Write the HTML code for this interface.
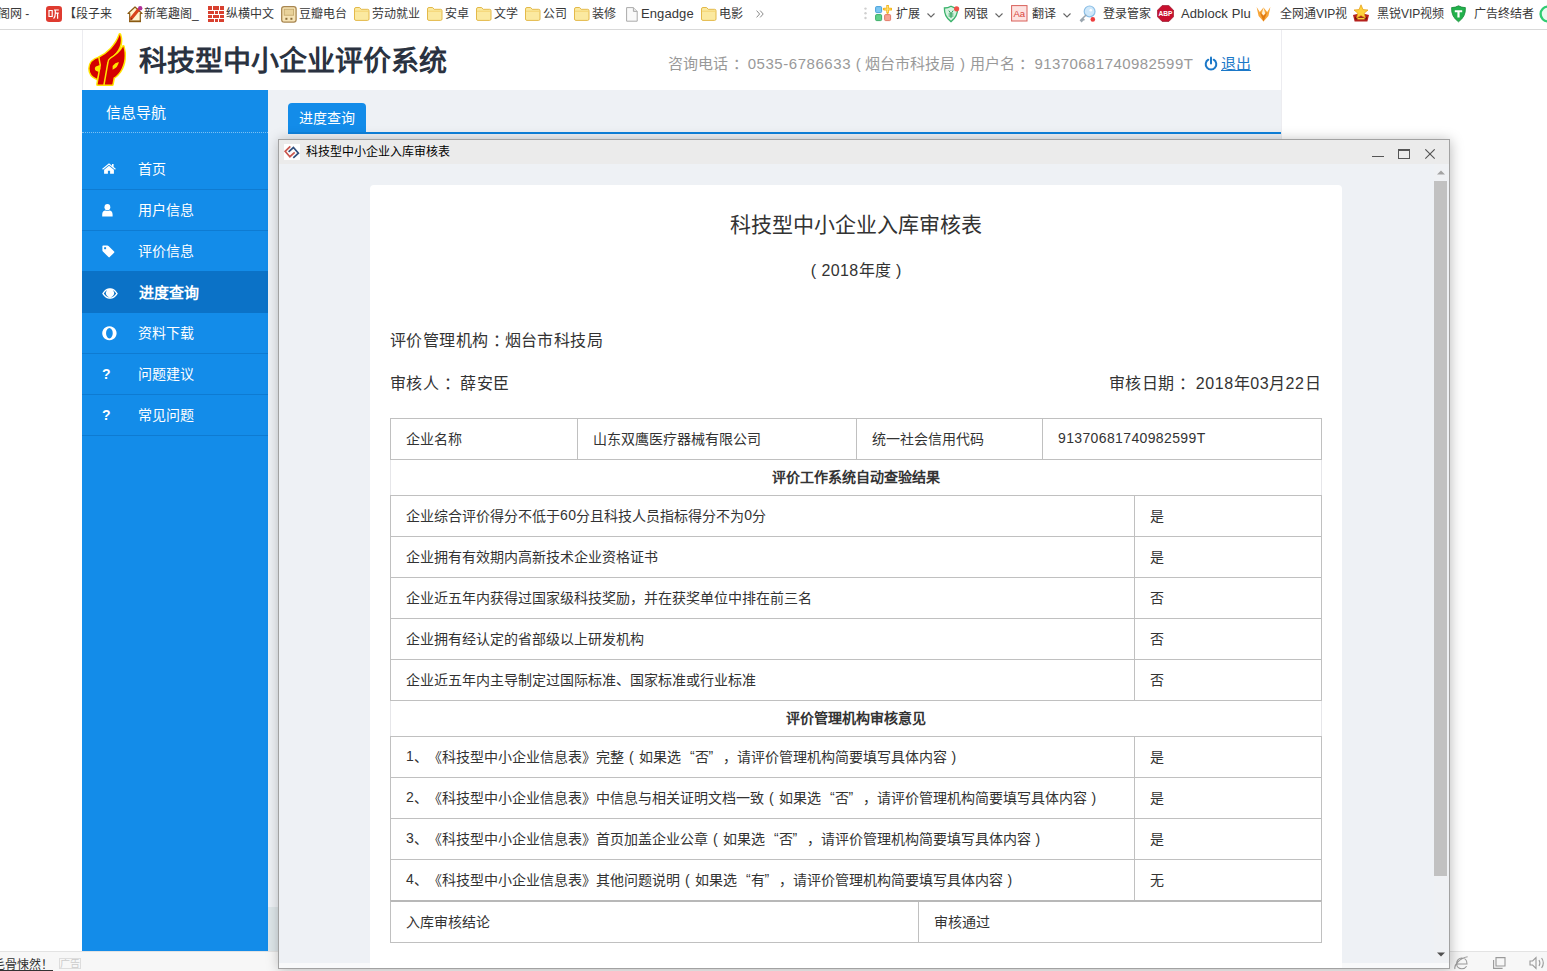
<!DOCTYPE html>
<html lang="zh-CN">
<head>
<meta charset="utf-8">
<title>科技型中小企业评价系统</title>
<style>
*{box-sizing:border-box;margin:0;padding:0}
html,body{width:1547px;height:971px;overflow:hidden;background:#fff}
body{font-family:"Liberation Sans",sans-serif;font-size:14px;color:#333;position:relative;text-spacing-trim:space-all}
.abs{position:absolute}
.n{letter-spacing:.37px}
/* bookmark bar */
#bm{left:0;top:0;width:1547px;height:30px;background:#fff;border-bottom:1px solid #d9d9d9;font-size:12px;color:#383838}
#bm span{position:absolute;top:5px;white-space:nowrap;line-height:18px}
#bm span.l{font-size:13px;letter-spacing:.1px}
#bm svg{position:absolute}
/* page frame */
#pg{left:82px;top:30px;width:1200px;height:921px;border-left:1px solid #ececf0;border-right:1px solid #ececf0}
/* header */
#hd{left:83px;top:30px;width:1198px;height:60px;background:#fff}
#hd .title{left:56px;top:12px;font-size:28px;font-weight:900;color:#2a3240;line-height:40px;white-space:nowrap}
#hd .info{left:585px;top:22px;word-spacing:.5px;font-size:15px;color:#999;line-height:24px;white-space:nowrap}
#hd .exit{left:1138px;top:22px;font-size:15px;color:#1b78c8;line-height:24px;text-decoration:underline;white-space:nowrap}
/* sidebar */
#sb{left:82px;top:90px;width:186px;height:861px;background:#138ce9;color:#fff}
#sb .h{position:absolute;left:0;top:0;width:186px;height:43px;line-height:46px;padding-left:24px;font-size:15px;border-bottom:1px dotted #7cc0f3}
#sb .m{position:absolute;left:0;width:186px;height:41px;line-height:40px;font-size:14px;border-bottom:1px solid #0e7bd2;padding-left:56px}
#sb .m.on{background:#0b72c7;font-weight:bold;font-size:15px;padding-left:57px;border-bottom:0}
#sb svg{position:absolute}
/* main */
#mn{left:268px;top:90px;width:1013px;height:861px;background:#eef1f5}
#mn .tab{left:20px;top:13px;width:78px;height:30px;background:#138ce9;color:#fff;font-size:14px;line-height:30px;text-align:center;border-radius:4px 4px 0 0}
#mn .line{left:20px;top:42px;width:993px;height:2px;background:#0f82dc}
#mn .dk{left:0;top:817px;width:1013px;height:44px;background:#dee6e9}
/* status bar */
#st{left:0;top:951px;width:1547px;height:20px;background:#f7f7f7;border-top:1px solid #e3e3e3;font-size:12px;color:#333}
/* dialog */
#dg{left:278px;top:139px;width:1172px;height:830px;background:#eef1f5;border:1px solid #a2a2a2;box-shadow:1px 1px 12px rgba(0,0,0,.26)}
#dg .tb{left:0;top:0;width:1170px;height:24px;background:#ebebeb}
#dg .tt{left:27px;top:4px;font-size:12px;color:#000;line-height:16px;white-space:nowrap}
#dg .sc{left:1155px;top:24px;width:15px;height:804px;background:#eff1f4}
#dg .th{left:1155px;top:41px;width:13px;height:695px;background:#c1c1c1}
#dg .ft{left:0;top:823px;width:1170px;height:5px;background:#f8f9fa}
#card{left:91px;top:45px;width:972px;height:783px;background:#fff;border-radius:4px 4px 0 0}
#card h3{position:absolute;left:0;top:23px;width:972px;text-align:center;font-size:21px;font-weight:normal;color:#333;line-height:34px}
#card .yr{left:0;top:73.5px;width:972px;text-align:center;font-size:16px;line-height:24px;word-spacing:1px}
#card .p{font-size:16px;letter-spacing:.38px;line-height:24px;white-space:nowrap}
#card .p .n{letter-spacing:.62px}
/* table */
#tb{left:20px;top:233px;width:932px;height:525px;font-size:14px;color:#333;word-spacing:1px}
#tb .r{position:absolute;left:0;width:932px;border:1px solid #c0c0c0;display:flex;z-index:2}
#tb .r.hh{border-color:#e6e6e9;border-top-color:transparent;border-bottom-color:transparent;z-index:1;justify-content:center;font-weight:bold}
#tb .c{height:100%;padding-left:15px;padding-bottom:2px;white-space:nowrap;display:flex;align-items:center;border-right:1px solid #c0c0c0}
#tb .c:last-child{border-right:0;flex:1}
#tb .hh .c{justify-content:center;padding-left:0;padding-bottom:3px}
.co{position:relative;left:.3em}
.n2{letter-spacing:.55px}
.ql{display:inline-block;width:14px;text-align:right}
.qr{display:inline-block;width:14px;text-align:left}
</style>
</head>
<body>
<div id="bm" class="abs">
<span style="left:-2px">阁网 -</span>
<svg style="left:46px;top:6px" width="16" height="16" viewBox="0 0 16 16"><rect width="16" height="16" rx="3.2" fill="#df3b30"/><path d="M3 4.5 H6.2 V10.5 H3 Z M8 4 H12.8 M9.3 4 V7.2 H12.8 M9.3 7.2 Q9.3 11 7.6 12.6 M11.6 7.2 V12.8" fill="none" stroke="#fff" stroke-width="1.2"/></svg>
<span style="left:64px">【段子来</span>
<svg style="left:127px;top:5px" width="17" height="18" viewBox="0 0 17 18"><path d="M1 8.5 L8 2 L15 8.5 H13.3 V16.3 H2.7 V8.5 Z" fill="#fff3cf" stroke="#8a5a12" stroke-width="1.2" stroke-linejoin="round"/><path d="M4.2 13.6 L11.6 4.6" stroke="#d8431c" stroke-width="3.2" stroke-linecap="round"/><path d="M3.6 14.8 L5.6 14 L4.4 12.8 Z" fill="#6a3a10"/><circle cx="13.2" cy="3.2" r="2.2" fill="#b0309a"/><path d="M2 16.4 H14" stroke="#8a5a12" stroke-width="1.6"/></svg>
<span style="left:144px">新笔趣阁_</span>
<svg style="left:208px;top:6px" width="16" height="16" viewBox="0 0 16 16"><rect x="0" y="0" width="4" height="4" fill="#d8402f"/><rect x="5" y="0" width="6" height="4" fill="#d8402f"/><rect x="12" y="0" width="4" height="4" fill="#d8402f"/><rect x="0" y="5" width="6" height="3" fill="#d8402f"/><rect x="7" y="5" width="3" height="3" fill="#d8402f"/><rect x="11" y="5" width="5" height="3" fill="#d8402f"/><rect x="0" y="9" width="4" height="3" fill="#d8402f"/><rect x="5" y="9" width="6" height="3" fill="#d8402f"/><rect x="12" y="9" width="4" height="3" fill="#d8402f"/><rect x="0" y="13" width="6" height="3" fill="#d8402f"/><rect x="7" y="13" width="3" height="3" fill="#d8402f"/><rect x="11" y="13" width="5" height="3" fill="#d8402f"/></svg>
<span style="left:226px">纵横中文</span>
<svg style="left:281px;top:6px" width="16" height="17" viewBox="0 0 16 17"><rect x="0.7" y="0.7" width="14.4" height="15.4" rx="2.4" fill="#f6e3b4" stroke="#a88650" stroke-width="1.3"/><rect x="3.2" y="3.2" width="9.4" height="6" fill="#e9d29a" stroke="#c2a66a" stroke-width=".8"/><rect x="4.4" y="11.8" width="2" height="2" fill="#8a6d3b"/><rect x="9.4" y="11.8" width="2" height="2" fill="#8a6d3b"/></svg>
<span style="left:299px">豆瓣电台</span>
<svg style="left:354px;top:7px" width="16" height="14" viewBox="0 0 16 14"><path d="M0.5 2 Q0.5 0.5 2 0.5 H5.6 L7.2 2.3 H13.6 Q15 2.3 15 3.7 V12 Q15 13.4 13.6 13.4 H2 Q0.5 13.4 0.5 12 Z" fill="#fbe9a0" stroke="#e3b94a"/><path d="M1 4.2 H14.6" stroke="#f3d36e" stroke-width="1"/></svg>
<span style="left:372px">劳动就业</span>
<svg style="left:427px;top:7px" width="16" height="14" viewBox="0 0 16 14"><path d="M0.5 2 Q0.5 0.5 2 0.5 H5.6 L7.2 2.3 H13.6 Q15 2.3 15 3.7 V12 Q15 13.4 13.6 13.4 H2 Q0.5 13.4 0.5 12 Z" fill="#fbe9a0" stroke="#e3b94a"/><path d="M1 4.2 H14.6" stroke="#f3d36e" stroke-width="1"/></svg>
<span style="left:445px">安卓</span>
<svg style="left:476px;top:7px" width="16" height="14" viewBox="0 0 16 14"><path d="M0.5 2 Q0.5 0.5 2 0.5 H5.6 L7.2 2.3 H13.6 Q15 2.3 15 3.7 V12 Q15 13.4 13.6 13.4 H2 Q0.5 13.4 0.5 12 Z" fill="#fbe9a0" stroke="#e3b94a"/><path d="M1 4.2 H14.6" stroke="#f3d36e" stroke-width="1"/></svg>
<span style="left:494px">文学</span>
<svg style="left:525px;top:7px" width="16" height="14" viewBox="0 0 16 14"><path d="M0.5 2 Q0.5 0.5 2 0.5 H5.6 L7.2 2.3 H13.6 Q15 2.3 15 3.7 V12 Q15 13.4 13.6 13.4 H2 Q0.5 13.4 0.5 12 Z" fill="#fbe9a0" stroke="#e3b94a"/><path d="M1 4.2 H14.6" stroke="#f3d36e" stroke-width="1"/></svg>
<span style="left:543px">公司</span>
<svg style="left:574px;top:7px" width="16" height="14" viewBox="0 0 16 14"><path d="M0.5 2 Q0.5 0.5 2 0.5 H5.6 L7.2 2.3 H13.6 Q15 2.3 15 3.7 V12 Q15 13.4 13.6 13.4 H2 Q0.5 13.4 0.5 12 Z" fill="#fbe9a0" stroke="#e3b94a"/><path d="M1 4.2 H14.6" stroke="#f3d36e" stroke-width="1"/></svg>
<span style="left:592px">装修</span>
<svg style="left:626px;top:7px" width="12" height="15" viewBox="0 0 12 15"><path d="M0.6 0.6 H7.4 L11.2 4.4 V14.2 H0.6 Z" fill="#fafafa" stroke="#aaa" stroke-width="1"/><path d="M7.4 0.6 V4.4 H11.2" fill="#e8e8e8" stroke="#aaa" stroke-width="1"/></svg>
<span class="l" style="left:641px">Engadge</span>
<svg style="left:701px;top:7px" width="16" height="14" viewBox="0 0 16 14"><path d="M0.5 2 Q0.5 0.5 2 0.5 H5.6 L7.2 2.3 H13.6 Q15 2.3 15 3.7 V12 Q15 13.4 13.6 13.4 H2 Q0.5 13.4 0.5 12 Z" fill="#fbe9a0" stroke="#e3b94a"/><path d="M1 4.2 H14.6" stroke="#f3d36e" stroke-width="1"/></svg>
<span style="left:719px">电影</span>
<svg style="left:756px;top:10px" width="8" height="8" viewBox="0 0 8 8"><path d="M0.6 0.6 L3.6 4 L0.6 7.4 M4.2 0.6 L7.2 4 L4.2 7.4" fill="none" stroke="#8a8a8a" stroke-width="1"/></svg>
<svg style="left:863px;top:6px" width="5" height="15" viewBox="0 0 5 15"><circle cx="2.5" cy="2.6" r="1.2" fill="#cfcfcf"/><circle cx="2.5" cy="7.3" r="1.2" fill="#cfcfcf"/><circle cx="2.5" cy="12" r="1.2" fill="#cfcfcf"/></svg>
<svg style="left:875px;top:5px" width="17" height="17" viewBox="0 0 17 17"><rect x="0.6" y="1.6" width="6" height="6" rx="1" fill="#7cc6f2" stroke="#3b9ad6" stroke-width=".9"/><rect x="0.6" y="9.6" width="6" height="6" rx="1" fill="#5fd08a" stroke="#2fa85e" stroke-width=".9"/><rect x="9.6" y="9.6" width="6" height="6" rx="1" fill="#f6a392" stroke="#e0705c" stroke-width=".9"/><path d="M12.6 0.6 V7.6 M9.1 4.1 H16.1" stroke="#f3b51c" stroke-width="2.6" stroke-linecap="round"/><path d="M12.6 1.4 V6.8 M9.9 4.1 H15.3" stroke="#ffe27a" stroke-width="1" stroke-linecap="round"/></svg>
<span style="left:896px">扩展</span>
<svg style="left:927px;top:13px" width="8" height="5" viewBox="0 0 8 5"><path d="M0.5 0.5 L4 4 L7.5 0.5" fill="none" stroke="#666" stroke-width="1.1"/></svg>
<svg style="left:943px;top:5px" width="18" height="18" viewBox="0 0 18 18"><path d="M8 1.2 Q11 3 14.6 3 Q15 11.5 8 16.6 Q1 11.5 1.4 3 Q5 3 8 1.2 Z" fill="#d5f2df" stroke="#3cb36c" stroke-width="1.3"/><path d="M5.8 5.6 L8 8.6 L10.2 5.6 M8 8.6 V13 M5.6 9 H10.4 M5.6 11 H10.4" fill="none" stroke="#2fa05c" stroke-width="1"/><circle cx="13.6" cy="3.8" r="2.6" fill="#f0524a"/></svg>
<span style="left:964px">网银</span>
<svg style="left:995px;top:13px" width="8" height="5" viewBox="0 0 8 5"><path d="M0.5 0.5 L4 4 L7.5 0.5" fill="none" stroke="#666" stroke-width="1.1"/></svg>
<svg style="left:1011px;top:5px" width="17" height="17" viewBox="0 0 17 17"><rect x="0.6" y="0.6" width="15.4" height="15.4" fill="#fde3e1" stroke="#d9605a" stroke-width="1"/><text x="8.3" y="12" font-family="Liberation Sans, sans-serif" font-size="9.5" fill="#d9433c" text-anchor="middle">Aa</text></svg>
<span style="left:1032px">翻译</span>
<svg style="left:1063px;top:13px" width="8" height="5" viewBox="0 0 8 5"><path d="M0.5 0.5 L4 4 L7.5 0.5" fill="none" stroke="#666" stroke-width="1.1"/></svg>
<svg style="left:1079px;top:5px" width="18" height="18" viewBox="0 0 18 18"><circle cx="10.6" cy="6.4" r="5.4" fill="#cfe8fa" stroke="#8cbfe6" stroke-width="1.2"/><circle cx="11.8" cy="5.2" r="1.3" fill="#fff"/><path d="M6.8 10.2 L1.6 15.2 L2.6 16.4 L4 15 M3.6 13.4 L5 14.8" fill="none" stroke="#9aa5ae" stroke-width="1.5" stroke-linecap="round"/><circle cx="13.8" cy="14.4" r="2.3" fill="#ee3d3d"/></svg>
<span style="left:1103px">登录管家</span>
<svg style="left:1157px;top:5px" width="17" height="17" viewBox="0 0 17 17"><path d="M5.2 0.5 H11.8 L16.5 5.2 V11.8 L11.8 16.5 H5.2 L0.5 11.8 V5.2 Z" fill="#c8102e" stroke="#8e0a20" stroke-width=".6"/><text x="8.5" y="11" font-family="Liberation Sans, sans-serif" font-size="6.6" font-weight="bold" fill="#fff" text-anchor="middle">ABP</text></svg>
<span class="l" style="left:1181px">Adblock Plu</span>
<svg style="left:1256px;top:6px" width="15" height="16" viewBox="0 0 15 16"><path d="M0.6 1 L3.8 6 L7.5 1.6 L11.2 6 L14.4 1 L12.4 10 L7.5 15.4 L2.6 10 Z" fill="#f7a63a"/><path d="M3.8 6 L7.5 15.4 L11.2 6 L7.5 9.6 Z" fill="#e07b12"/><path d="M7.5 1.6 L5.8 7.6 L7.5 9.6 L9.2 7.6 Z" fill="#fff2d8"/></svg>
<span style="left:1280px">全网通<span style="position:static">VIP</span>视</span>
<svg style="left:1352px;top:4px" width="18" height="19" viewBox="0 0 18 19"><path d="M1 11 Q9 8.4 17 11 L15.4 17.6 H2.6 Z" fill="#b5211d"/><path d="M3 13 H15 V15.4 H3 Z" fill="#7e1010"/><path d="M9 0.8 L11 5.6 L16 6 L12.2 9.2 L13.4 14 L9 11.4 L4.6 14 L5.8 9.2 L2 6 L7 5.6 Z" fill="#ffd23a" stroke="#e39a10" stroke-width=".7"/><path d="M5.4 14.6 H12.6" stroke="#ffd23a" stroke-width="1.6"/></svg>
<span style="left:1377px">黑锐<span style="position:static">VIP</span>视频</span>
<svg style="left:1450px;top:5px" width="17" height="18" viewBox="0 0 17 18"><path d="M8.5 0.8 Q11.4 2.6 15.4 2.6 Q16 11.6 8.5 16.8 Q1 11.6 1.6 2.6 Q5.6 2.6 8.5 0.8 Z" fill="#22b14c" stroke="#158a36" stroke-width=".8"/><path d="M4.8 5.2 H12.2 V7.2 H9.6 V12.6 H7.4 V7.2 H4.8 Z" fill="#fff"/></svg>
<span style="left:1474px">广告终结者</span>
<svg style="left:1538px;top:5px" width="10" height="18" viewBox="0 0 10 18"><circle cx="10" cy="9" r="7.4" fill="#eafaf0" stroke="#2fcc71" stroke-width="2.4"/></svg>
</div>
<div id="pg" class="abs"></div>
<div id="hd" class="abs">
<svg class="abs" style="left:-3px;top:0" width="60" height="60" viewBox="0 0 60 60">
<g fill="#d40000" stroke="#ffe500" stroke-width="3" stroke-linejoin="round" paint-order="stroke">
<path d="M19.4 27.6 Q9.6 30.4 9.6 38.6 Q9.6 46 17.2 48.8 L19.2 42 A3.4 3.4 0 0 1 20.2 35.2 Z"/>
<path d="M19.6 27.4 C27 24 36 16 39.9 4.6 C42.6 13 39.5 21.5 29.8 28.6 C28.5 29.6 28.2 30.4 28 31.6 L23.9 54.6 H17.6 L21 35 Z"/>
<path d="M43.3 16.6 C45.6 24 45 34 40 41.4 C38 44.4 35.6 46.4 33.6 47.6 L32.3 54.6 H24.8 L28.8 31.8 C29 30.4 29.6 29.6 31 28.6 C36 25.6 40.6 21.6 43.3 16.6 Z"/>
</g>
<path d="M32.6 36 Q35 32.6 38.8 32 Q38.2 37.2 32.6 39.8 Z" fill="#ffe500"/>
<circle cx="17.6" cy="38.6" r="2.7" fill="#ffe500"/>
</svg>
  <div class="abs title">科技型中小企业评价系统</div>
  <div class="abs info">咨询电话<span class="co">：</span> <span class="n2">0535-6786633</span> ( 烟台市科技局 ) 用户名<span class="co">：</span> <span class="n" style="letter-spacing:.44px">91370681740982599T</span></div>
<svg class="abs" style="left:1121px;top:25.5px" width="14" height="15" viewBox="0 0 14 15"><path d="M4.3 3.7 A5.3 5.3 0 1 0 9.7 3.7" fill="none" stroke="#1b78c8" stroke-width="2" stroke-linecap="round"/><path d="M7 1.5 V7.4" stroke="#1b78c8" stroke-width="2" stroke-linecap="round"/></svg>
  <div class="abs exit">退出</div>
</div>
<div id="sb" class="abs">
  <div class="h">信息导航</div>
  <div class="m" style="top:59px">首页</div>
  <div class="m" style="top:100px">用户信息</div>
  <div class="m" style="top:141px">评价信息</div>
  <div class="m on" style="top:181px;height:42px;line-height:44px">进度查询</div>
  <div class="m" style="top:223px">资料下载</div>
  <div class="m" style="top:264px">问题建议</div>
  <div class="m" style="top:305px">常见问题</div>
<svg style="left:20px;top:73px" width="14" height="11" viewBox="0 0 14 11" fill="#fff"><path d="M7 0.2 L0.2 5.8 L0.9 6.7 L7 1.7 L13.1 6.7 L13.8 5.8 L11.6 4 V0.9 H10 V2.7 Z"/><path d="M7 2.7 L2.1 6.7 V10.8 H5.9 V7.7 H8.1 V10.8 H11.9 V6.7 Z"/></svg>
<svg style="left:20px;top:114px" width="11" height="13" viewBox="0 0 11 13" fill="#fff"><ellipse cx="5.4" cy="3.2" rx="2.9" ry="3.1"/><path d="M0.2 12.4 V10.4 C0.2 7.8 1.6 6.6 3.4 6.4 Q5.4 7.6 7.4 6.4 C9.2 6.6 10.6 7.8 10.6 10.4 V12.4 Z"/></svg>
<svg style="left:20px;top:155px" width="13" height="13" viewBox="0 0 13 13" fill="#fff"><path fill-rule="evenodd" d="M0.4 1.2 Q0.4 0.4 1.2 0.4 H5.4 Q6 0.4 6.5 0.9 L12.1 6.5 Q12.7 7.1 12.1 7.7 L7.7 12.1 Q7.1 12.7 6.5 12.1 L0.9 6.5 Q0.4 6 0.4 5.4 Z M3.1 2 A1.1 1.1 0 1 0 3.11 2 Z"/></svg>
<svg style="left:20px;top:198px" width="16" height="11" viewBox="0 0 16 11" fill="#fff"><path fill-rule="evenodd" d="M0.2 5.5 C2.6 1.4 5.4 0.2 8 0.2 C10.6 0.2 13.4 1.4 15.8 5.5 C13.4 9.6 10.6 10.8 8 10.8 C5.4 10.8 2.6 9.6 0.2 5.5 Z M1.8 5.5 C3.6 8.2 5.8 9.4 8 9.4 C10.2 9.4 12.4 8.2 14.2 5.5 C13.2 4 12 2.9 10.8 2.3 A4 4 0 1 1 5.2 2.3 C4 2.9 2.8 4 1.8 5.5 Z"/><path d="M8 2.6 A2.6 2.6 0 1 0 10.6 5.2 A1.4 1.4 0 0 1 8 4.4 Z"/></svg>
<svg style="left:20px;top:236px" width="15" height="15" viewBox="0 0 15 15" fill="#fff"><path fill-rule="evenodd" d="M7.4 0.2 A7.2 7 0 1 0 7.41 0.2 Z M7.4 1.9 A3.3 5.3 0 1 1 7.39 1.9 Z"/></svg>
<div style="position:absolute;left:20px;top:276px;font-size:14px;font-weight:bold;line-height:16px">?</div>
<div style="position:absolute;left:20px;top:317px;font-size:14px;font-weight:bold;line-height:16px">?</div>
</div>
<div id="mn" class="abs">
  <div class="abs dk"></div>
  <div class="abs tab">进度查询</div>
  <div class="abs line"></div>
</div>
<div id="st" class="abs">
<div class="abs" style="left:-7px;top:5px;line-height:16px;text-decoration:underline;white-space:nowrap;color:#333">毛骨悚然！</div>
<div class="abs" style="left:59px;top:6px;width:22px;height:11px;border:1px solid #ddd;color:#ccc;font-size:10px;line-height:9px;text-align:center;white-space:nowrap;overflow:hidden">广告</div>
<svg class="abs" style="left:1454px;top:4px" width="92" height="14" viewBox="0 0 92 14" fill="none" stroke="#9a9a9a" stroke-width="1.1"><path d="M2.6 8 H13 C13 4 10.6 2 7.8 2 C4.8 2 2.6 4.4 2.6 7.6 C2.6 10.8 4.8 12.8 7.8 12.8 C10 12.8 11.6 11.8 12.6 10.2 M1 13 C-0.4 9 6 2 13.6 0.8"/><path d="M42 1.6 H51 V10 H42 Z M39.6 4 V12.4 H48.6"/><path d="M76 5 H78.6 L82 1.6 V12.4 L78.6 9 H76 Z M85 4 Q86.8 7 85 10 M87.6 2 Q91 7 87.6 12"/></svg>
</div>
<div id="dg" class="abs">
  <div class="abs tb"></div>
<svg class="abs" style="left:5px;top:4px" width="16" height="16" viewBox="0 0 16 16"><rect width="16" height="16" fill="#fff"/><path d="M6.3 2.3 L1.1 7.3 L5.9 12.7 L10.7 8.4" fill="none" stroke="#c9564e" stroke-width="1.7"/><path d="M4.6 7.8 L9.4 3.5 L14.4 9.1 L9.3 13.9" fill="none" stroke="#33507e" stroke-width="1.7"/></svg>
<svg class="abs" style="left:1093px;top:9px" width="66" height="12" viewBox="0 0 66 12"><path d="M0 7.5 H12" stroke="#555" stroke-width="1"/><rect x="26.5" y="0.5" width="11" height="9" fill="none" stroke="#555" stroke-width="1"/><path d="M26 1 H38" stroke="#555" stroke-width="2"/><path d="M53.3 0.3 L62.7 9.7 M62.7 0.3 L53.3 9.7" stroke="#555" stroke-width="1.1"/></svg>

  <div class="abs tt">科技型中小企业入库审核表</div>
  <div class="abs sc"></div>
  <div class="abs th"></div>
  <div class="abs ft"></div>
<svg class="abs" style="left:1158px;top:30.4px" width="8" height="5" viewBox="0 0 8 5"><path d="M0 4.6 L4 0.4 L8 4.6 Z" fill="#a3a3a3"/></svg>
<svg class="abs" style="left:1158px;top:812px" width="8" height="5" viewBox="0 0 8 5"><path d="M0 0.4 L4 4.6 L8 0.4 Z" fill="#505050"/></svg>
  <div id="card" class="abs">
    <h3>科技型中小企业入库审核表</h3>
    <div class="abs yr">( <span class="n">2018</span>年度 )</div>
    <div class="abs p" style="left:20px;top:143.5px">评价管理机构<span class="co">：</span>烟台市科技局</div>
    <div class="abs p" style="left:20px;top:187px">审核人<span class="co">：</span> 薛安臣</div>
    <div class="abs p" style="right:21px;top:187px">审核日期<span class="co">：</span> <span class="n">2018</span>年<span class="n">03</span>月<span class="n">22</span>日</div>
    <div id="tb" class="abs">
      <div class="r" style="top:0;height:42px"><div class="c" style="width:187px">企业名称</div><div class="c" style="width:279px">山东双鹰医疗器械有限公司</div><div class="c" style="width:186px">统一社会信用代码</div><div class="c"><span class="n">91370681740982599T</span></div></div>
      <div class="r hh" style="top:41px;height:37px"><div class="c">评价工作系统自动查验结果</div></div>
      <div class="r" style="top:77px;height:42px"><div class="c" style="width:744px">企业综合评价得分不低于<span class="n">60</span>分且科技人员指标得分不为<span class="n">0</span>分</div><div class="c">是</div></div>
      <div class="r" style="top:118px;height:42px"><div class="c" style="width:744px">企业拥有有效期内高新技术企业资格证书</div><div class="c">是</div></div>
      <div class="r" style="top:159px;height:42px"><div class="c" style="width:744px">企业近五年内获得过国家级科技奖励，并在获奖单位中排在前三名</div><div class="c">否</div></div>
      <div class="r" style="top:200px;height:42px"><div class="c" style="width:744px">企业拥有经认定的省部级以上研发机构</div><div class="c">否</div></div>
      <div class="r" style="top:241px;height:42px"><div class="c" style="width:744px">企业近五年内主导制定过国际标准、国家标准或行业标准</div><div class="c">否</div></div>
      <div class="r hh" style="top:282px;height:37px"><div class="c">评价管理机构审核意见</div></div>
      <div class="r" style="top:318px;height:42px"><div class="c" style="width:744px"><span class="n">1</span>、《科技型中小企业信息表》完整 ( 如果选<span class="ql">“</span>否<span class="qr">”</span>，请评价管理机构简要填写具体内容 )</div><div class="c">是</div></div>
      <div class="r" style="top:359px;height:42px"><div class="c" style="width:744px"><span class="n">2</span>、《科技型中小企业信息表》中信息与相关证明文档一致 ( 如果选<span class="ql">“</span>否<span class="qr">”</span>，请评价管理机构简要填写具体内容 )</div><div class="c">是</div></div>
      <div class="r" style="top:400px;height:42px"><div class="c" style="width:744px"><span class="n">3</span>、《科技型中小企业信息表》首页加盖企业公章 ( 如果选<span class="ql">“</span>否<span class="qr">”</span>，请评价管理机构简要填写具体内容 )</div><div class="c">是</div></div>
      <div class="r" style="top:441px;height:42px"><div class="c" style="width:744px"><span class="n">4</span>、《科技型中小企业信息表》其他问题说明 ( 如果选<span class="ql">“</span>有<span class="qr">”</span>，请评价管理机构简要填写具体内容 )</div><div class="c">无</div></div>
      <div class="r" style="top:482px;height:43px;border-top-width:2px;border-top-color:#b8b8b8"><div class="c" style="width:528px">入库审核结论</div><div class="c">审核通过</div></div>
    </div>
  </div>
</div>
</body>
</html>
